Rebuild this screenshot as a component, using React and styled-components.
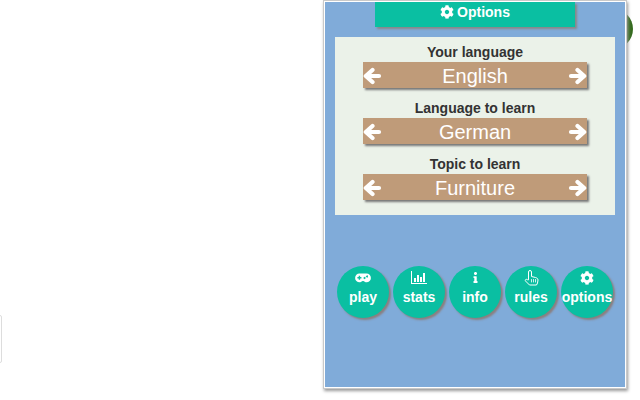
import React from 'react';
import styled, { createGlobalStyle } from 'styled-components';
import { FaCog, FaInfo } from 'react-icons/fa';

const GlobalStyle = createGlobalStyle`
  html, body {
    margin: 0;
    padding: 0;
    background: #fff;
    overflow: hidden;
  }
  body {
    font-family: "Liberation Sans", Arial, sans-serif;
  }
`;

const Stage = styled.div`
  position: relative;
  width: 640px;
  height: 400px;
  display: flex;
  align-items: flex-start;
  padding-left: 323px;
  box-sizing: border-box;
`;

const SideCard = styled.div`
  position: absolute;
  left: -10px;
  top: 315px;
  width: 10px;
  height: 46px;
  border: 1px solid #ddd;
  border-radius: 2px;
  background: #fff;
`;

const GreenDot = styled.div`
  position: absolute;
  left: 593px;
  top: 9px;
  width: 40px;
  height: 40px;
  border-radius: 50%;
  background: #356b1f;
`;

const Panel = styled.main`
  position: relative;
  width: 304px;
  height: 389px;
  box-sizing: border-box;
  border: 2px solid #fff;
  outline: 1px solid #c9c9c9;
  outline-offset: -1px;
  background: #80abd9;
  box-shadow: 1px 2px 3px #999;
  display: flex;
  flex-direction: column;
  align-items: center;
`;

const Title = styled.h1`
  margin: 0;
  width: 200px;
  height: 25px;
  background: #0abfa2;
  box-shadow: 2px 2px 2px #888;
  color: #fff;
  font-size: 14px;
  font-weight: 700;
  display: flex;
  align-items: flex-start;
  justify-content: center;
  gap: 3px;
  line-height: 21px;
  svg {
    margin-top: 3px;
    font-size: 14px;
  }
`;

const Settings = styled.section`
  margin-top: 10px;
  width: 280px;
  height: 178px;
  background: #ebf2e9;
  display: flex;
  flex-direction: column;
  align-items: center;
  padding-top: 7px;
  box-sizing: border-box;
`;

const Field = styled.div`
  height: 56px;
  display: flex;
  flex-direction: column;
  align-items: center;
`;

const FieldLabel = styled.div`
  color: #333;
  font-size: 14px;
  font-weight: 700;
  line-height: 16px;
  height: 18px;
`;

const Picker = styled.div`
  width: 224px;
  height: 26px;
  background: #bf9b79;
  box-shadow: 2px 2px 2px #777;
  color: #fff;
  font-size: 20px;
  line-height: 24px;
  display: flex;
  align-items: center;
  justify-content: space-between;
  padding: 2px 0 0;
  box-sizing: border-box;
`;

const NavRow = styled.nav`
  margin-top: 51px;
  display: flex;
  gap: 4px;
`;

const RoundButton = styled.button`
  width: 52px;
  height: 52px;
  padding: 3px 0 0;
  border: none;
  border-radius: 50%;
  background: #0abfa2;
  box-shadow: 2px 2px 2px #8a7f7f;
  color: #fff;
  font-family: inherit;
  font-size: 14px;
  font-weight: 700;
  display: flex;
  flex-direction: column;
  align-items: center;
  white-space: nowrap;
`;

const IconSlot = styled.span`
  height: 20px;
  padding-bottom: 3px;
  box-sizing: border-box;
  display: flex;
  align-items: center;
  justify-content: center;
  font-size: 16px;
`;

const Arrow = ({ flip }) => (
  <svg width="19" height="18" viewBox="0 0 19 18" fill="none" stroke="#fff" strokeWidth="4.2"
    strokeLinejoin="round" strokeLinecap="round" style={{ transform: flip ? 'scaleX(-1)' : 'none' }}>
    <path d="M9.500 3 L2.800 9 L9.500 15 M2.800 9 H16" />
  </svg>
);

const GamepadIcon = () => (
  <svg width="16" height="10" viewBox="0 0 16 10" fill="#fff" fillRule="evenodd">
    <path d="M4.5 0.5h7a4.3 4.3 0 0 1 0 8.8c-1.4 0-2-.8-3-1.3h-1c-1 .5-1.6 1.3-3 1.3a4.3 4.3 0 0 1 0-8.8zM3.7 2.7v1.3H2.4v1.4h1.3v1.3h1.4V5.400h1.300V4H5.100V2.700zM10.500 5a1 1 0 1 0 0 .01zM13 3.500a1 1 0 1 0 0 .01z" />
  </svg>
);

const ChartIcon = () => (
  <svg width="16" height="14" viewBox="0 0 16 14" fill="#fff">
    <path d="M0 0h1v12h15v1H0z" />
    <path d="M3 7h2v4H3zM6 4h2v7H6zM9 6h2v5H9zM12 2h2v9h-2z" />
  </svg>
);

const HandIcon = () => (
  <svg width="15" height="16" viewBox="0 0 15 16" fill="none" stroke="#fff" strokeWidth="1"
    strokeLinejoin="round" strokeLinecap="round">
    <path d="M4.500 9.500V2a1.500 1.500 0 0 1 3 0v4.500l4 1c1.200.3 2.500 1 2.500 2.500l-.5 3-1 2H5.500L1.500 11c-.8-1 .6-2.400 1.700-1.500z" />
    <path d="M7.500 9.500v2.500M9.500 9.500v2.500M11.500 9.500v2.500" opacity="0.8" />
  </svg>
);

const fields = [
  { label: 'Your language', value: 'English' },
  { label: 'Language to learn', value: 'German' },
  { label: 'Topic to learn', value: 'Furniture' },
];

const buttons = [
  { label: 'play', icon: <GamepadIcon /> },
  { label: 'stats', icon: <ChartIcon /> },
  { label: 'info', icon: <FaInfo size={11} /> },
  { label: 'rules', icon: <HandIcon /> },
  { label: 'options', icon: <FaCog size={14} /> },
];

export default function App() {
  return (
    <Stage>
      <GlobalStyle />
      <SideCard />
      <GreenDot />
      <Panel>
        <Title><FaCog /> Options</Title>
        <Settings>
          {fields.map((f) => (
            <Field key={f.label}>
              <FieldLabel>{f.label}</FieldLabel>
              <Picker>
                <Arrow />
                <span>{f.value}</span>
                <Arrow flip />
              </Picker>
            </Field>
          ))}
        </Settings>
        <NavRow>
          {buttons.map((b) => (
            <RoundButton key={b.label}>
              <IconSlot>{b.icon}</IconSlot>
              {b.label}
            </RoundButton>
          ))}
        </NavRow>
      </Panel>
    </Stage>
  );
}
